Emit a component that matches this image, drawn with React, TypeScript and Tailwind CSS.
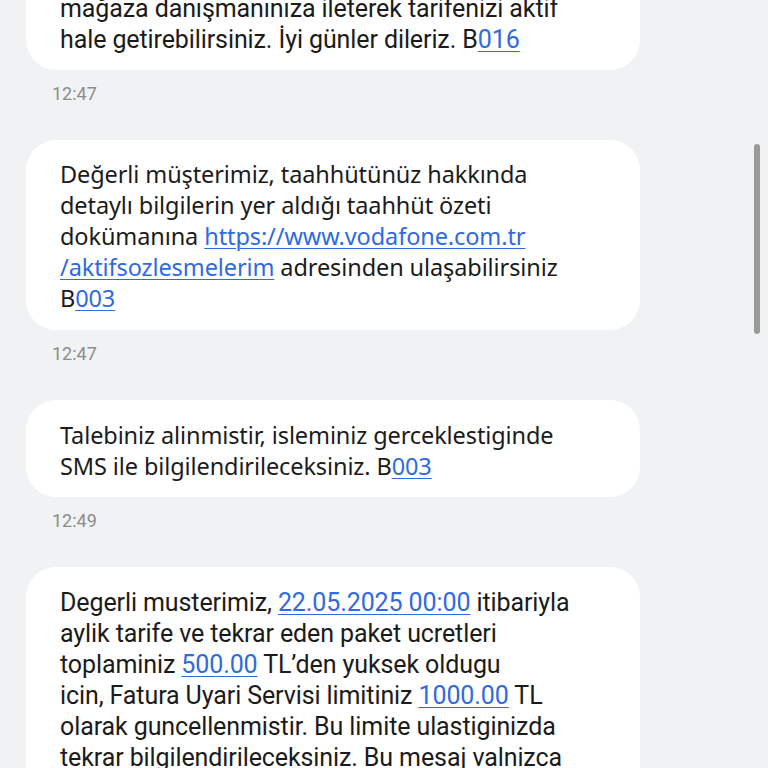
import React from 'react';

type Part = string | { link: string };

const Link: React.FC<{ children: React.ReactNode }> = ({ children }) => (
    <span className="text-[#2f6ae0] underline decoration-1 underline-offset-[3px]">{children}</span>
);

const Bubble: React.FC<{ lines: Part[][]; narrow?: boolean; className?: string }> = ({ lines, narrow, className = '' }) => (
    <div className={`w-[614px] rounded-[30px] bg-white pl-[34px] pr-4 text-[#1b1b1b] ${className}`}>
        {lines.map((line, i) => (
            <div
                key={i}
                className={`whitespace-pre leading-[31px] ${
                    narrow
                        ? "font-['Roboto',sans-serif] text-[25px] tracking-[-0.1px]"
                        : "font-['Noto_Sans',sans-serif] text-[23.5px] tracking-[-0.1px]"
                }`}
            >
                {line.map((p, j) => (typeof p === 'string' ? <span key={j}>{p}</span> : <Link key={j}>{p.link}</Link>))}
            </div>
        ))}
    </div>
);

const Time: React.FC<{ t: string }> = ({ t }) => (
    <div className="mt-[13px] mb-[35px] pl-[52px] font-['Roboto',sans-serif] text-[18px] leading-[22px] text-[#8c8c8c]">{t}</div>
);

export default function App() {
    return (
        <div className="relative h-[768px] w-[768px] overflow-hidden bg-[#f1f2f4]">
            <div className="flex flex-col pl-[26px]">
                <Bubble
                    narrow
                    className="mt-[-27px] pt-[20px] pb-[15px]"
                    lines={[
                        ['mağaza danışmanınıza ileterek tarifenizi aktif'],
                        ['hale getirebilirsiniz. İyi günler dileriz. B', { link: '016' }],
                    ]}
                />
            </div>
            <Time t="12:47" />
            <div className="pl-[26px]">
                <Bubble
                    className="pt-[19px] pb-[16px]"
                    lines={[
                        ['Değerli müşterimiz, taahhütünüz hakkında'],
                        ['detaylı bilgilerin yer aldığı taahhüt özeti'],
                        ['dokümanına ', { link: 'https://www.vodafone.com.tr' }],
                        [{ link: '/aktifsozlesmelerim' }, ' adresinden ulaşabilirsiniz'],
                        ['B', { link: '003' }],
                    ]}
                />
            </div>
            <Time t="12:47" />
            <div className="pl-[26px]">
                <Bubble
                    className="pt-[20px] pb-[15px]"
                    lines={[
                        ['Talebiniz alinmistir, isleminiz gerceklestiginde'],
                        ['SMS ile bilgilendirileceksiniz. B', { link: '003' }],
                    ]}
                />
            </div>
            <Time t="12:49" />
            <div className="pl-[26px]">
                <Bubble
                    narrow
                    className="pt-[20px] pb-[15px]"
                    lines={[
                        ['Degerli musterimiz, ', { link: '22.05.2025 00:00' }, ' itibariyla'],
                        ['aylik tarife ve tekrar eden paket ucretleri'],
                        ['toplaminiz ', { link: '500.00' }, ' TL\u2019den yuksek oldugu'],
                        ['icin, Fatura Uyari Servisi limitiniz ', { link: '1000.00' }, ' TL'],
                        ['olarak guncellenmistir. Bu limite ulastiginizda'],
                        ['tekrar bilgilendirileceksiniz. Bu mesaj valnizca'],
                        ['bilgilendirme amaclidir.'],
                    ]}
                />
            </div>
            <div className="absolute left-[754px] top-[144px] h-[190px] w-[6px] rounded-full bg-[#9a9a9a]" />
        </div>
    );
}
